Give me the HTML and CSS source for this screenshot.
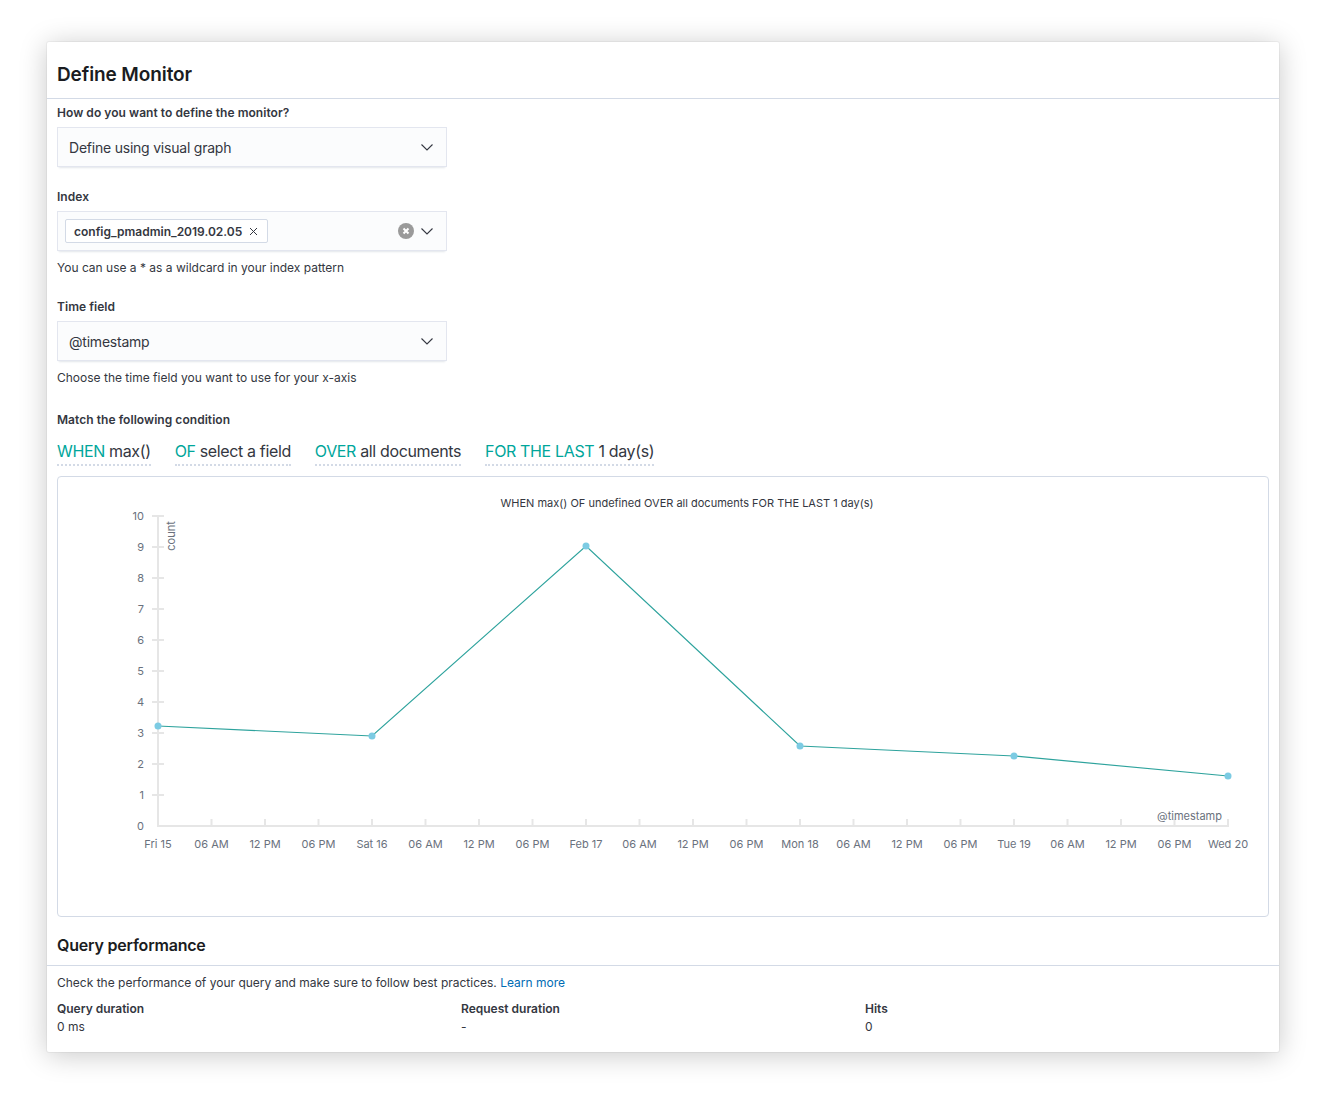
FILE: index.html
```html
<!DOCTYPE html>
<html>
<head>
<meta charset="utf-8">
<link rel="stylesheet" href="styles.css">
</head>
<body>
<div class="page">
  <div class="panel">
    <div class="panel-header"><h2 class="title">Define Monitor</h2></div>
    <div class="panel-body">
      <div class="label">How do you want to define the monitor?</div>
      <div class="control">
        <span class="control-text">Define using visual graph</span>
        <svg class="chevron" width="14" height="14" viewBox="0 0 14 14"><path d="M1.5 4.5 L7 10 L12.5 4.5" fill="none" stroke="#343741" stroke-width="1.1"/></svg>
      </div>

      <div class="label field-gap">Index</div>
      <div class="control combo">
        <span class="pill">config_pmadmin_2019.02.05<svg class="pill-x" width="9" height="9" viewBox="0 0 9 9"><path d="M1 1 L8 8 M8 1 L1 8" stroke="#343741" stroke-width="1"/></svg></span>
        <span class="combo-icons">
          <svg class="clear" width="16" height="16" viewBox="0 0 16 16"><circle cx="8" cy="8" r="8" fill="#9a9a9a"/><path d="M5.5 5.5 L10.5 10.5 M10.5 5.5 L5.5 10.5" stroke="#fff" stroke-width="2"/></svg>
          <svg class="chevron-inline" width="14" height="14" viewBox="0 0 14 14"><path d="M1.5 4.5 L7 10 L12.5 4.5" fill="none" stroke="#343741" stroke-width="1.1"/></svg>
        </span>
      </div>
      <div class="help">You can use a * as a wildcard in your index pattern</div>

      <div class="label field-gap">Time field</div>
      <div class="control">
        <span class="control-text">@timestamp</span>
        <svg class="chevron" width="14" height="14" viewBox="0 0 14 14"><path d="M1.5 4.5 L7 10 L12.5 4.5" fill="none" stroke="#343741" stroke-width="1.1"/></svg>
      </div>
      <div class="help">Choose the time field you want to use for your x-axis</div>

      <div class="label cond-gap">Match the following condition</div>
      <div class="expressions">
        <span class="expr"><span class="kw">WHEN</span> max()</span>
        <span class="expr"><span class="kw">OF</span> select a field</span>
        <span class="expr"><span class="kw">OVER</span> all documents</span>
        <span class="expr"><span class="kw">FOR THE LAST</span> 1 day(s)</span>
      </div>

      <div class="chart">
        <svg width="1210" height="439" viewBox="0 0 1210 439" class="chart-svg">
          <text x="629" y="30" text-anchor="middle" class="chart-title">WHEN max() OF undefined OVER all documents FOR THE LAST 1 day(s)</text>
          <g stroke="#e6e6e6" stroke-width="2">
            <line x1="100" y1="38" x2="100" y2="350"/>
            <line x1="99" y1="349" x2="1171" y2="349"/>
            <line x1="94" y1="39" x2="106" y2="39"/>
            <line x1="94" y1="70" x2="106" y2="70"/>
            <line x1="94" y1="101" x2="106" y2="101"/>
            <line x1="94" y1="132" x2="106" y2="132"/>
            <line x1="94" y1="163" x2="106" y2="163"/>
            <line x1="94" y1="194" x2="106" y2="194"/>
            <line x1="94" y1="225" x2="106" y2="225"/>
            <line x1="94" y1="256" x2="106" y2="256"/>
            <line x1="94" y1="287" x2="106" y2="287"/>
            <line x1="94" y1="318" x2="106" y2="318"/>
          </g>
          <g stroke="#e6e6e6" stroke-width="2">
            <line x1="100" y1="342" x2="100" y2="349"/>
            <line x1="153.5" y1="342" x2="153.5" y2="349"/>
            <line x1="207" y1="342" x2="207" y2="349"/>
            <line x1="260.5" y1="342" x2="260.5" y2="349"/>
            <line x1="314" y1="342" x2="314" y2="349"/>
            <line x1="367.5" y1="342" x2="367.5" y2="349"/>
            <line x1="421" y1="342" x2="421" y2="349"/>
            <line x1="474.5" y1="342" x2="474.5" y2="349"/>
            <line x1="528" y1="342" x2="528" y2="349"/>
            <line x1="581.5" y1="342" x2="581.5" y2="349"/>
            <line x1="635" y1="342" x2="635" y2="349"/>
            <line x1="688.5" y1="342" x2="688.5" y2="349"/>
            <line x1="742" y1="342" x2="742" y2="349"/>
            <line x1="795.5" y1="342" x2="795.5" y2="349"/>
            <line x1="849" y1="342" x2="849" y2="349"/>
            <line x1="902.5" y1="342" x2="902.5" y2="349"/>
            <line x1="956" y1="342" x2="956" y2="349"/>
            <line x1="1009.5" y1="342" x2="1009.5" y2="349"/>
            <line x1="1063" y1="342" x2="1063" y2="349"/>
            <line x1="1116.5" y1="342" x2="1116.5" y2="349"/>
            <line x1="1170" y1="342" x2="1170" y2="349"/>
          </g>
          <g class="tick" text-anchor="end">
            <text x="86" y="43">10</text>
            <text x="86" y="74">9</text>
            <text x="86" y="105">8</text>
            <text x="86" y="136">7</text>
            <text x="86" y="167">6</text>
            <text x="86" y="198">5</text>
            <text x="86" y="229">4</text>
            <text x="86" y="260">3</text>
            <text x="86" y="291">2</text>
            <text x="86" y="322">1</text>
            <text x="86" y="353">0</text>
          </g>
          <g class="tick" text-anchor="middle">
            <text x="100" y="371">Fri 15</text>
            <text x="153.5" y="371">06 AM</text>
            <text x="207" y="371">12 PM</text>
            <text x="260.5" y="371">06 PM</text>
            <text x="314" y="371">Sat 16</text>
            <text x="367.5" y="371">06 AM</text>
            <text x="421" y="371">12 PM</text>
            <text x="474.5" y="371">06 PM</text>
            <text x="528" y="371">Feb 17</text>
            <text x="581.5" y="371">06 AM</text>
            <text x="635" y="371">12 PM</text>
            <text x="688.5" y="371">06 PM</text>
            <text x="742" y="371">Mon 18</text>
            <text x="795.5" y="371">06 AM</text>
            <text x="849" y="371">12 PM</text>
            <text x="902.5" y="371">06 PM</text>
            <text x="956" y="371">Tue 19</text>
            <text x="1009.5" y="371">06 AM</text>
            <text x="1063" y="371">12 PM</text>
            <text x="1116.5" y="371">06 PM</text>
            <text x="1170" y="371">Wed 20</text>
          </g>
          <text class="tick" x="1164" y="343" text-anchor="end">@timestamp</text>
          <text class="tick" transform="translate(117 59) rotate(-90)" text-anchor="middle">count</text>
          <polyline points="100,249 314,259 528,69 742,269 956,279 1170,299" fill="none" stroke="#2ea39d" stroke-width="1.2"/>
          <g fill="#7ccbe3">
            <circle cx="100" cy="249" r="3.5"/>
            <circle cx="314" cy="259" r="3.5"/>
            <circle cx="528" cy="69" r="3.5"/>
            <circle cx="742" cy="269" r="3.5"/>
            <circle cx="956" cy="279" r="3.5"/>
            <circle cx="1170" cy="299" r="3.5"/>
          </g>
        </svg>
      </div>
    </div>

    <div class="section-header"><h3 class="subtitle">Query performance</h3></div>
    <div class="section-body">
      <div class="text">Check the performance of your query and make sure to follow best practices. <a class="link" href="#">Learn more</a></div>
      <div class="stats">
        <div class="stat"><div class="stat-label">Query duration</div><div class="stat-value">0 ms</div></div>
        <div class="stat"><div class="stat-label">Request duration</div><div class="stat-value">-</div></div>
        <div class="stat"><div class="stat-label">Hits</div><div class="stat-value">0</div></div>
      </div>
    </div>
  </div>
</div>
</body>
</html>
```
FILE: styles.css
```css
html, body {
  margin: 0;
  background: #ffffff;
}
body {
  font-family: Inter, "Noto Sans", "Liberation Sans", sans-serif;
  color: #343741;
}
.page {
  padding: 42px 42px 43px 47px;
}
.panel {
  background: #fff;
  height: 1010px;
  box-sizing: border-box;
  box-shadow: 0 3px 28px rgba(0, 0, 0, 0.22), 0 0 0 1px rgba(0, 0, 0, 0.04);
  border-radius: 2px;
}
.panel-header {
  height: 57px;
  box-sizing: border-box;
  padding: 21px 10px 0;
  border-bottom: 1px solid #d3dae6;
}
.title {
  margin: 0;
  font-size: 19px;
  line-height: 24px;
  font-weight: 600;
  color: #1a1c21;
  letter-spacing: -0.1px;
}
.panel-body {
  padding: 4px 10px 0;
}
.label {
  padding-top: 1px;
  font-size: 12px;
  line-height: 18px;
  font-weight: 600;
  color: #343741;
  letter-spacing: 0.05px;
}
.field-gap { margin-top: 20px; }
.cond-gap { margin-top: 23px; }
.control {
  margin-top: 5px;
  width: 390px;
  height: 40px;
  box-sizing: border-box;
  background: #fbfcfd;
  box-shadow: 0 1px 1px -1px rgba(152, 162, 179, 0.2), 0 3px 2px -2px rgba(152, 162, 179, 0.25), inset 0 0 0 1px rgba(15, 39, 118, 0.1);
  display: flex;
  align-items: center;
  justify-content: space-between;
  padding: 0 13px 0 12px;
}
.control-text {
  font-size: 14px;
  color: #343741;
  letter-spacing: -0.22px;
}
.chevron { display: block; }
.combo { padding-left: 8px; }
.pill {
  display: inline-flex;
  align-items: center;
  height: 24px;
  box-sizing: border-box;
  background: #fff;
  border: 1px solid #d3dae6;
  border-radius: 2px;
  padding: 0 9px 0 8px;
  font-size: 12px;
  font-weight: 600;
  color: #343741;
}
.pill-x { margin-left: 7px; display: block; }
.combo-icons {
  display: flex;
  align-items: center;
  gap: 6px;
}
.clear, .chevron-inline { display: block; }
.help {
  margin-top: 7px;
  padding-top: 1px;
  font-size: 12px;
  line-height: 18px;
  color: #343741;
}
.expressions {
  margin-top: 10px;
  display: flex;
  gap: 24px;
}
.expr {
  font-size: 16px;
  line-height: 24px;
  padding-bottom: 1px;
  border-bottom: 2px dotted #d3dae6;
  color: #343741;
  letter-spacing: -0.36px;
}
.kw { color: #00a69b; }
.chart {
  margin-top: 10px;
  height: 441px;
  box-sizing: border-box;
  border: 1px solid #d3dae6;
  border-radius: 4px;
  overflow: hidden;
}
.chart-svg {
  display: block;
  font-family: Inter, "Noto Sans", sans-serif;
}
.chart-title {
  font-size: 11px;
  fill: #343741;
}
.tick {
  font-size: 11px;
  fill: #6a717d;
}
.section-header {
  padding: 16px 10px 8px;
  border-bottom: 1px solid #d3dae6;
}
.subtitle {
  margin: 0;
  font-size: 16px;
  line-height: 24px;
  font-weight: 600;
  color: #1a1c21;
  letter-spacing: -0.2px;
}
.section-body {
  padding: 8px 10px 0;
}
.text {
  font-size: 12px;
  line-height: 18px;
}
.link {
  color: #006bb4;
  text-decoration: none;
}
.stats {
  margin-top: 8px;
  display: grid;
  grid-template-columns: repeat(3, 1fr);
}
.stat-label {
  font-size: 12px;
  line-height: 18px;
  font-weight: 600;
}
.stat-value {
  font-size: 12px;
  line-height: 18px;
}
```
